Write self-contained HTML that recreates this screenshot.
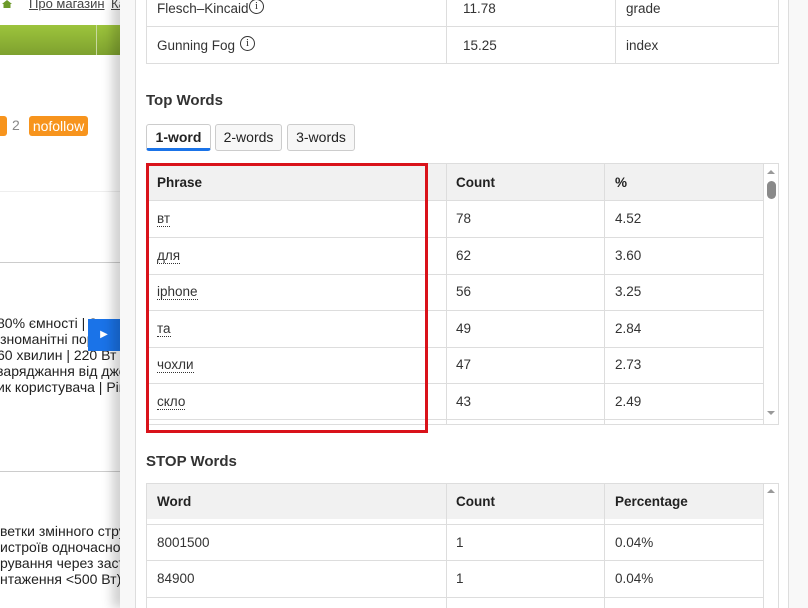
<!DOCTYPE html>
<html><head><meta charset="utf-8"><style>
*{box-sizing:border-box;margin:0;padding:0}
body{width:808px;height:608px;overflow:hidden;position:relative;background:#fff;font-family:"Liberation Sans",Arial,sans-serif;color:#333}
.a{position:absolute}
.lt{font-size:14px;color:#222;white-space:nowrap}
.panel{position:absolute;left:120px;top:0;width:688px;height:608px;background:#f8f8f8;box-shadow:-8px 0 10px rgba(0,0,0,.18)}
.inner{position:absolute;left:15px;top:0;width:654px;height:608px;background:#fff;border-left:1px solid #ddd;border-right:1px solid #ddd}
.t{position:absolute;font-family:"Liberation Sans",sans-serif;font-size:13.5px;color:#333;white-space:nowrap}
.h{font-weight:bold;color:#222}
.hl{position:absolute;height:1px;background:#ddd}
.vl{position:absolute;width:1px;background:#ddd}
.u{border-bottom:1px dotted #333}
.tab{position:absolute;top:124px;height:27px;border:1px solid #ccc;border-radius:3px;background:#f7f7f7;font-size:14px;color:#222;text-align:center;line-height:25px}
.info{position:absolute;width:15px;height:15px;border:1.3px solid #333;border-radius:50%;font-size:11px;text-align:center;line-height:13px;font-family:'Liberation Serif',serif;color:#333}
</style></head><body>
<!-- left page -->
<div class="a" style="left:2px;top:0;width:10px;height:8px;background:#6c9a2a;clip-path:polygon(50% 0,100% 50%,85% 50%,85% 100%,15% 100%,15% 50%,0 50%)"></div>
<div class="a lt" style="left:29px;top:-4px;font-size:13px;color:#444;text-decoration:underline">Про магазин</div>
<div class="a lt" style="left:111px;top:-4px;font-size:13px;color:#444;text-decoration:underline">Ка</div>
<div class="a" style="left:0;top:25px;width:120px;height:30px;background:linear-gradient(#9dc43c,#7ea12f)"></div>
<div class="a" style="left:96px;top:25px;width:1px;height:30px;background:#c8d8a0"></div>
<div class="a" style="left:0;top:116px;width:7px;height:20px;background:#f7941d;border-radius:0 3px 3px 0"></div>
<div class="a lt" style="left:12px;top:117px;color:#888">2</div>
<div class="a" style="left:29px;top:116px;width:59px;height:20px;background:#f7941d;border-radius:3px;color:#fff;font-size:14px;text-align:center;line-height:20px">nofollow</div>
<div class="a" style="left:0;top:191px;width:120px;height:1px;background:#eee"></div>
<div class="a" style="left:0;top:262px;width:120px;height:1px;background:#ccc"></div>
<div class="a lt" style="top:315px;left:-3px">80% ємності | 2</div>
<div class="a lt" style="top:331px;left:-3px">ізноманітні пор</div>
<div class="a lt" style="top:347px;left:-3px">60 хвилин | 220 Вт со</div>
<div class="a lt" style="top:363px;left:-3px">заряджання від джер</div>
<div class="a lt" style="top:379px;left:-3px">ик користувача | Ріве</div>
<div class="a" style="left:88px;top:319px;width:32px;height:32px;background:#1a73e8;color:#fff;font-size:10px;text-align:center;line-height:32px">▶</div>
<div class="a" style="left:0;top:471px;width:120px;height:1px;background:#ccc"></div>
<div class="a lt" style="top:523px;left:0">ветки змінного струм</div>
<div class="a lt" style="top:539px;left:0">истроїв одночасно | </div>
<div class="a lt" style="top:555px;left:0">рування через засто</div>
<div class="a lt" style="top:571px;left:0">нтаження &lt;500 Вт):</div>

<div class="panel"><div class="inner"></div></div>

<!-- top table -->
<div class="vl" style="left:146px;top:0;height:64px"></div>
<div class="vl" style="left:778px;top:0;height:64px"></div>
<div class="vl" style="left:446px;top:0;height:64px"></div>
<div class="vl" style="left:615px;top:0;height:64px"></div>
<div class="hl" style="left:146px;top:26px;width:633px"></div>
<div class="hl" style="left:146px;top:63px;width:633px"></div>
<div class="t" style="left:157px;top:1px">Flesch–Kincaid</div>
<div class="info" style="left:249px;top:-1px">i</div>
<div class="t" style="left:157px;top:38px">Gunning Fog</div>
<div class="info" style="left:240px;top:36px">i</div>
<div class="t" style="left:463px;top:1px">11.78</div>
<div class="t" style="left:626px;top:1px">grade</div>
<div class="t" style="left:463px;top:38px">15.25</div>
<div class="t" style="left:626px;top:38px">index</div>

<div class="t" style="left:146px;top:92px;font-size:15px;font-weight:bold;color:#333">Top Words</div>
<div class="tab" style="left:146px;width:65px;background:#fff;font-weight:bold;border-bottom:3px solid #1a73e8">1-word</div>
<div class="tab" style="left:215px;width:67px">2-words</div>
<div class="tab" style="left:287px;width:68px">3-words</div>

<!-- top words table -->
<div class="a" style="left:146px;top:164px;width:618px;height:37px;background:#f1f1f1"></div>
<div class="hl" style="left:146px;top:163px;width:633px"></div>
<div class="vl" style="left:778px;top:163px;height:262px"></div>
<div class="vl" style="left:446px;top:163px;height:262px"></div>
<div class="vl" style="left:604px;top:163px;height:262px"></div>
<div class="vl" style="left:763px;top:163px;height:262px"></div>
<div class="hl" style="left:146px;top:200px;width:618px"></div>
<div class="hl" style="left:146px;top:237px;width:618px"></div>
<div class="hl" style="left:146px;top:274px;width:618px"></div>
<div class="hl" style="left:146px;top:310px;width:618px"></div>
<div class="hl" style="left:146px;top:347px;width:618px"></div>
<div class="hl" style="left:146px;top:383px;width:618px"></div>
<div class="hl" style="left:146px;top:419px;width:618px"></div>
<div class="hl" style="left:146px;top:424px;width:633px"></div>
<div class="t h" style="left:157px;top:175px">Phrase</div>
<div class="t h" style="left:456px;top:175px">Count</div>
<div class="t h" style="left:615px;top:175px">%</div>
<div class="t" style="left:157px;top:211px"><span class="u">вт</span></div>
<div class="t" style="left:157px;top:248px"><span class="u">для</span></div>
<div class="t" style="left:157px;top:284px"><span class="u">iphone</span></div>
<div class="t" style="left:157px;top:321px"><span class="u">та</span></div>
<div class="t" style="left:157px;top:357px"><span class="u">чохли</span></div>
<div class="t" style="left:157px;top:394px"><span class="u">скло</span></div>
<div class="t" style="left:456px;top:211px">78</div><div class="t" style="left:615px;top:211px">4.52</div>
<div class="t" style="left:456px;top:248px">62</div><div class="t" style="left:615px;top:248px">3.60</div>
<div class="t" style="left:456px;top:284px">56</div><div class="t" style="left:615px;top:284px">3.25</div>
<div class="t" style="left:456px;top:321px">49</div><div class="t" style="left:615px;top:321px">2.84</div>
<div class="t" style="left:456px;top:357px">47</div><div class="t" style="left:615px;top:357px">2.73</div>
<div class="t" style="left:456px;top:394px">43</div><div class="t" style="left:615px;top:394px">2.49</div>
<div class="a" style="left:767px;top:170px;width:0;height:0;border:4px solid transparent;border-bottom:4px solid #999;border-top:0"></div>
<div class="a" style="left:767px;top:181px;width:9px;height:18px;background:#8a8a8a;border-radius:5px"></div>
<div class="a" style="left:767px;top:411px;width:0;height:0;border:4px solid transparent;border-top:4px solid #999;border-bottom:0"></div>
<div class="a" style="left:146px;top:163px;width:282px;height:270px;border:3px solid #d9121a"></div>

<div class="t" style="left:146px;top:453px;font-size:15px;font-weight:bold;color:#333">STOP Words</div>
<div class="a" style="left:146px;top:484px;width:618px;height:35px;background:#f1f1f1"></div>
<div class="hl" style="left:146px;top:483px;width:633px"></div>
<div class="vl" style="left:146px;top:483px;height:125px"></div>
<div class="vl" style="left:778px;top:483px;height:125px"></div>
<div class="vl" style="left:446px;top:483px;height:125px"></div>
<div class="vl" style="left:604px;top:483px;height:125px"></div>
<div class="vl" style="left:763px;top:483px;height:125px"></div>
<div class="hl" style="left:146px;top:524px;width:618px"></div>
<div class="hl" style="left:146px;top:560px;width:618px"></div>
<div class="hl" style="left:146px;top:597px;width:618px"></div>
<div class="t h" style="left:157px;top:494px">Word</div>
<div class="t h" style="left:456px;top:494px">Count</div>
<div class="t h" style="left:615px;top:494px">Percentage</div>
<div class="t" style="left:157px;top:535px">8001500</div><div class="t" style="left:456px;top:535px">1</div><div class="t" style="left:615px;top:535px">0.04%</div>
<div class="t" style="left:157px;top:571px">84900</div><div class="t" style="left:456px;top:571px">1</div><div class="t" style="left:615px;top:571px">0.04%</div>
<div class="a" style="left:767px;top:489px;width:0;height:0;border:4px solid transparent;border-bottom:4px solid #999;border-top:0"></div>
</body></html>
